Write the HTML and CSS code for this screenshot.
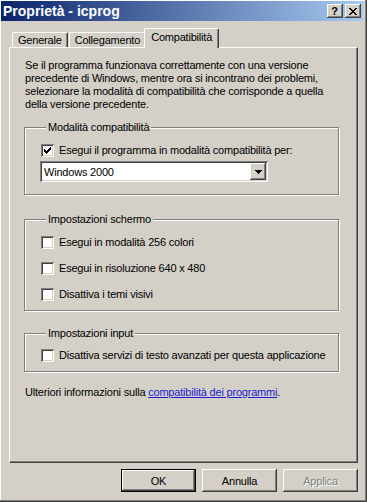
FILE: index.html
```html
<!DOCTYPE html>
<html lang="it">
<head>
    <meta charset="UTF-8">
    <title>Proprietà - icprog</title>
    <link rel="stylesheet" href="styles.css">
</head>
<body>
    <div class="window">
        <!-- Caption bar -->
        <div class="titlebar">
            <span class="title">Proprietà - icprog</span>
            <div class="caption-buttons">
                <span class="cap-btn help">?</span>
                <span class="cap-btn close">
                    <svg width="8" height="7" viewBox="0 0 8 7">
                        <path d="M0 0h2v1H0z M6 0h2v1H6z M1 1h2v1H1z M5 1h2v1H5z M2 2h4v1H2z M3 3h2v1H3z M2 4h4v1H2z M1 5h2v1H1z M5 5h2v1H5z M0 6h2v1H0z M6 6h2v1H6z" fill="#000"/>
                    </svg>
                </span>
            </div>
        </div>

        <div class="dialog">
            <!-- Tab strip -->
            <div class="tabs">
                <div class="tab">Generale</div>
                <div class="tab">Collegamento</div>
                <div class="tab selected">Compatibilità</div>
            </div>

            <!-- Tab page -->
            <div class="panel">
                <p class="intro">Se il programma funzionava correttamente con una versione<br>precedente di Windows, mentre ora si incontrano dei problemi,<br>selezionare la modalità di compatibilità che corrisponde a quella<br>della versione precedente.</p>

                <fieldset class="group group-mode">
                    <legend>Modalità compatibilità</legend>
                    <div class="check">
                        <span class="box">
                            <svg width="7" height="7" viewBox="0 0 7 7">
                                <path d="M6 0h1v1H6z M5 1h2v1H5z M0 2h1v1H0z M4 2h3v1H4z M0 3h2v1H0z M3 3h3v1H3z M0 4h5v1H0z M1 5h3v1H1z M2 6h1v1H2z" fill="#000"/>
                            </svg>
                        </span>
                        <span>Esegui il programma in modalità compatibilità per:</span>
                    </div>
                    <div class="combo">
                        <span class="combo-text">Windows 2000</span>
                        <span class="combo-arrow">
                            <svg width="7" height="4" viewBox="0 0 7 4">
                                <path d="M0 0h7v1H0z M1 1h5v1H1z M2 2h3v1H2z M3 3h1v1H3z" fill="#000"/>
                            </svg>
                        </span>
                    </div>
                </fieldset>

                <fieldset class="group group-screen">
                    <legend>Impostazioni schermo</legend>
                    <div class="check"><span class="box"></span><span>Esegui in modalità 256 colori</span></div>
                    <div class="check"><span class="box"></span><span>Esegui in risoluzione 640 x 480</span></div>
                    <div class="check"><span class="box"></span><span>Disattiva i temi visivi</span></div>
                </fieldset>

                <fieldset class="group group-input">
                    <legend>Impostazioni input</legend>
                    <div class="check"><span class="box"></span><span>Disattiva servizi di testo avanzati per questa applicazione</span></div>
                </fieldset>

                <p class="more">Ulteriori informazioni sulla <a href="#">compatibilità dei programmi</a>.</p>
            </div>

            <!-- Dialog buttons -->
            <div class="buttons">
                <button class="btn default">OK</button>
                <button class="btn">Annulla</button>
                <button class="btn disabled">Applica</button>
            </div>
        </div>
    </div>
</body>
</html>
```

FILE: styles.css
```css
html, body {
    margin: 0;
    padding: 0;
    background: #d4d0c8;
}

body {
    font-family: "Liberation Sans", Arial, sans-serif;
    font-size: 11px;
    letter-spacing: -0.2px;
    color: #000;
}

/* Outer window frame (classic 3D border) */
.window {
    width: 367px;
    height: 502px;
    box-sizing: border-box;
    padding: 1px 4px 4px 1px;
    background: #d4d0c8;
    box-shadow: inset -1px -1px 0 #404040, inset -2px -2px 0 #808080, inset 1px 1px 0 #ffffff;
    display: flex;
    flex-direction: column;
}

/* Caption */
.titlebar {
    height: 20px;
    flex: none;
    display: flex;
    align-items: center;
    justify-content: space-between;
    padding: 0 2px 0 2px;
    background: linear-gradient(to right, #0a246a, #a6caf0);
}

.title {
    color: #fff;
    font-weight: bold;
    font-size: 14px;
    letter-spacing: 0;
}

.caption-buttons {
    display: flex;
    gap: 2px;
}

.cap-btn {
    width: 16px;
    height: 14px;
    box-sizing: border-box;
    display: flex;
    align-items: center;
    justify-content: center;
    background: #d4d0c8;
    box-shadow: inset -1px -1px 0 #404040, inset 1px 1px 0 #ffffff, inset -2px -2px 0 #808080;
    font-weight: bold;
    font-size: 11px;
    letter-spacing: 0;
    line-height: 14px;
}

.cap-btn.help {
    padding: 0 1px 1px 0;
}

/* Dialog body */
.dialog {
    flex: 1;
    display: flex;
    flex-direction: column;
    padding: 7px 5px 6px 8px;
}

.tabs {
    height: 19px;
    flex: none;
    display: flex;
    align-items: flex-end;
    padding-left: 3px;
}

.tab {
    height: 15px;
    box-sizing: border-box;
    padding: 0 5px 0 5px;
    line-height: 14px;
    border-left: 1px solid #fff;
    border-top: 1px solid #fff;
    border-right: 1px solid #404040;
    border-top-left-radius: 2px;
    border-top-right-radius: 2px;
    box-shadow: inset -1px 0 0 #808080;
}

.tab + .tab {
    margin-left: 1px;
}

.tab.selected {
    height: 20px;
    margin: 0 -2px -1px -2px;
    padding: 0 6px 0 6px;
    line-height: 16px;
    background: #d4d0c8;
    position: relative;
    z-index: 1;
}

/* Tab page */
.panel {
    flex: 1;
    box-sizing: border-box;
    padding: 11px 18px 0 14px;
    border-top: 1px solid #fff;
    border-left: 1px solid #fff;
    border-right: 1px solid #404040;
    border-bottom: 1px solid #404040;
    box-shadow: inset -1px -1px 0 #808080;
}

.intro {
    margin: 0 0 0 1px;
    line-height: 13px;
    white-space: nowrap;
}

/* Group boxes with etched border */
.group {
    margin: 10px 0 0 0;
    min-width: 0;
    border: 1px solid #808080;
    box-shadow: 1px 1px 0 #fff, inset 1px 1px 0 #fff;
    padding: 10px 0 12px 16px;
}

.group legend {
    padding: 0 2px;
    margin-left: 5px;
    line-height: 13px;
    background: #d4d0c8;
}

.group-screen {
    margin-top: 18px;
    padding-bottom: 9px;
}

.group-screen .check + .check {
    margin-top: 13px;
}

.group-input {
    margin-top: 16px;
    padding-top: 9px;
    padding-bottom: 9px;
}

.check {
    display: flex;
    align-items: center;
    gap: 5px;
    height: 13px;
    line-height: 13px;
}

.box {
    width: 13px;
    height: 13px;
    box-sizing: border-box;
    flex: none;
    display: flex;
    align-items: center;
    justify-content: center;
    background: #fff;
    box-shadow: inset 1px 1px 0 #808080, inset -1px -1px 0 #fff, inset 2px 2px 0 #404040, inset -2px -2px 0 #d4d0c8;
}

/* Combo box */
.combo {
    margin: 4px 0 0 -1px;
    width: 228px;
    height: 21px;
    box-sizing: border-box;
    display: flex;
    align-items: center;
    justify-content: space-between;
    padding: 2px;
    background: #fff;
    box-shadow: inset 1px 1px 0 #808080, inset -1px -1px 0 #fff, inset 2px 2px 0 #404040, inset -2px -2px 0 #d4d0c8;
}

.combo-text {
    padding-left: 2px;
}

.combo-arrow {
    width: 16px;
    height: 17px;
    box-sizing: border-box;
    display: flex;
    align-items: center;
    justify-content: center;
    background: #d4d0c8;
    box-shadow: inset -1px -1px 0 #404040, inset 1px 1px 0 #fff, inset -2px -2px 0 #808080;
}

.more {
    margin: 14px 0 0 1px;
    line-height: 13px;
}

.more a {
    color: #1c1cd0;
    text-decoration: underline;
}

/* Bottom buttons */
.buttons {
    flex: none;
    display: flex;
    justify-content: flex-end;
    gap: 6px;
    margin-top: 6px;
}

.btn {
    width: 75px;
    height: 23px;
    box-sizing: border-box;
    margin: 0;
    padding: 0;
    border: none;
    background: #d4d0c8;
    font-family: "Liberation Sans", Arial, sans-serif;
    font-size: 11px;
    letter-spacing: -0.2px;
    color: #000;
    box-shadow: inset -1px -1px 0 #404040, inset 1px 1px 0 #fff, inset -2px -2px 0 #808080;
}

.btn.default {
    border: 1px solid #000;
}

.btn.disabled {
    color: #808080;
    text-shadow: 1px 1px 0 #fff;
}
```
